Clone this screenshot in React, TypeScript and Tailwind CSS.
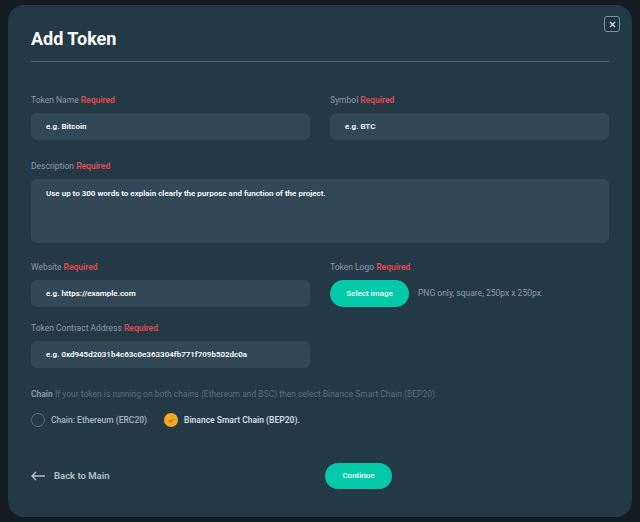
import React from "react";

function Label({ text, required = true }: { text: string; required?: boolean }) {
  return (
    <div className="text-[8.5px] leading-[14px] text-[#8b9cab] mb-[6px]">
      {text} {required && <span className="text-[#e24a55] font-semibold">Required</span>}
    </div>
  );
}

function Field({ placeholder }: { placeholder: string }) {
  return (
    <div className="h-[27px] rounded-md bg-[#314956] pl-[15px] flex items-center text-[8px] font-semibold text-white">
      {placeholder}
    </div>
  );
}

export default function App() {
  return (
    <div
      className="w-[640px] h-[522px] bg-[#141c24] pt-[5px] px-[8px]"
      style={{ fontFamily: "Roboto, 'Open Sans', sans-serif" }}
    >
      <div className="relative h-[512px] rounded-2xl bg-[#243946] px-[23px]">
        <button className="absolute right-[12px] top-[11px] w-[16px] h-[16px] rounded-[3px] border border-[#7d92a2] bg-[#1f3340] flex items-center justify-center">
          <svg width="7" height="7" viewBox="0 0 7 7" stroke="#d8e1e8" strokeWidth="1.2">
            <path d="M1 1l5 5M6 1L1 6" />
          </svg>
        </button>

        <h1 className="pt-[23px] text-[18px] leading-[22px] font-bold text-white">Add Token</h1>
        <div className="mt-[11px] h-px bg-[#4f6979]" />

        <div className="mt-[31px] grid grid-cols-2 gap-x-[20px]">
          <div>
            <Label text="Token Name" />
            <Field placeholder="e.g. Bitcoin" />
          </div>
          <div>
            <Label text="Symbol" />
            <Field placeholder="e.g. BTC" />
          </div>
        </div>

        <div className="mt-[19px]">
          <Label text="Description" />
          <div className="h-[64px] rounded-md bg-[#314956] pl-[15px] pt-[8px] text-[8px] leading-[14px] font-semibold text-white">
            Use up to 300 words to explain clearly the purpose and function of the project.
          </div>
        </div>

        <div className="mt-[17px] grid grid-cols-2 gap-x-[20px]">
          <div>
            <Label text="Website" />
            <Field placeholder="e.g. https://example.com" />
            <div className="mt-[14px]">
              <Label text="Token Contract Address" />
              <Field placeholder="e.g. 0xd945d2031b4c63c0e363304fb771f709b502dc0a" />
            </div>
          </div>
          <div>
            <Label text="Token Logo" />
            <div className="flex items-center gap-[9px]">
              <button className="h-[27px] w-[79px] rounded-full bg-[#03c9a9] text-[8px] font-semibold text-[#e8fff9]">
                Select image
              </button>
              <span className="text-[8.5px] text-[#8b9cab]">PNG only, square, 250px x 250px.</span>
            </div>
          </div>
        </div>

        <div className="mt-[19px] text-[8.5px] leading-[14px] text-[#586e7e]">
          <span className="text-[#8b9cab] font-semibold">Chain</span> If your token is running on both chains
          (Ethereum and BSC) then select Binance Smart Chain (BEP20).
        </div>

        <div className="mt-[12px] flex items-center">
          <div className="flex items-center gap-[6px]">
            <span className="w-[14px] h-[14px] rounded-full border-[1.5px] border-[#5a7080]" />
            <span className="text-[8.5px] font-medium text-[#a9b7c2]">Chain: Ethereum (ERC20)</span>
          </div>
          <div className="ml-[17px] flex items-center gap-[6px]">
            <span className="w-[14px] h-[14px] rounded-full bg-[#f6a623] flex items-center justify-center">
              <svg width="6" height="5" viewBox="0 0 6 5" fill="none" stroke="#6b4a10" strokeWidth="1">
                <path d="M0.8 2.6l1.5 1.4L5.2 1" />
              </svg>
            </span>
            <span className="text-[8.5px] font-semibold text-[#d4dde4]">Binance Smart Chain (BEP20).</span>
          </div>
        </div>

        <div className="mt-[36px] flex items-center">
          <div className="w-[294px] flex items-center gap-[8px] text-[#b3c1cb]">
            <svg width="15" height="10" viewBox="0 0 15 10" fill="none" stroke="currentColor" strokeWidth="1.4">
              <path d="M14 5H1.5M5 1L1 5l4 4" />
            </svg>
            <span className="text-[9.5px] font-semibold">Back to Main</span>
          </div>
          <button className="h-[26px] w-[67px] rounded-full bg-[#03c9a9] text-[8px] font-semibold text-[#e8fff9]">
            Continue
          </button>
        </div>
      </div>
    </div>
  );
}
